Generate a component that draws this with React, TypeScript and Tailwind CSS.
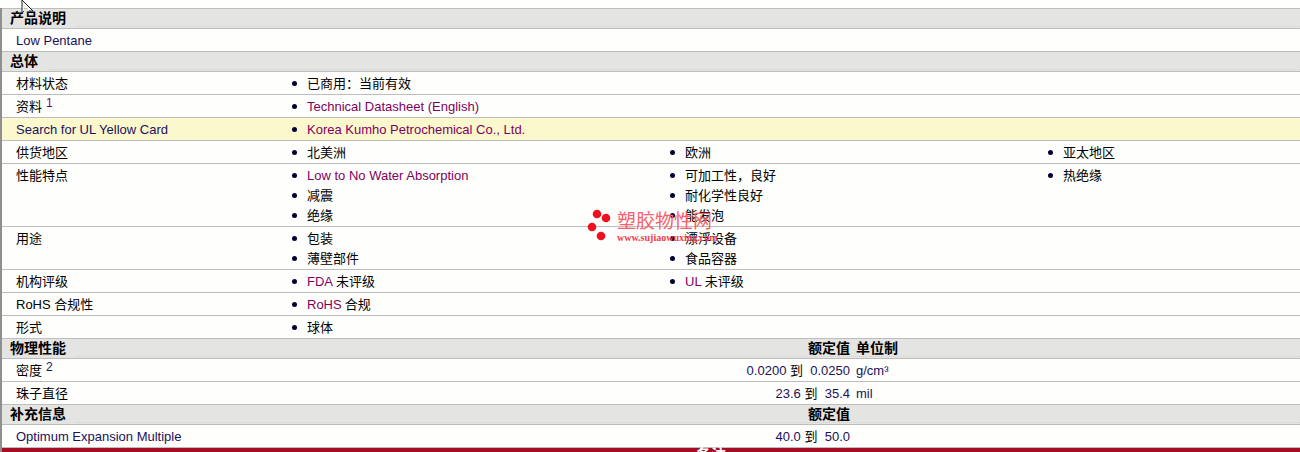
import React from 'react';

const FONT = "font-['Liberation_Sans','Noto_Sans_CJK_SC',sans-serif]";
const LINK = 'text-[#800060]';

type Item = { text: string; link?: boolean; suffix?: string };

const SectionHeader = ({ title, rated, unit }: { title: string; rated?: boolean; unit?: boolean }) => (
  <div className="flex h-[20px] items-center border-b border-[#bdbdbd] bg-[#e4e4e2] text-[14px] font-bold text-black">
    <div className="pl-[8px]">{title}</div>
    <div className="mt-[15px] ml-[10px] flex-1 border-b border-dotted border-[#d6d2d2]" />
    {rated && <div className="absolute left-[808px]">额定值</div>}
    {unit && <div className="absolute left-[856px]">单位制</div>}
  </div>
);

const Bullet = ({ item }: { item: Item }) => (
  <div className="flex h-[20px] items-center pt-[1px]">
    <span className="ml-[6px] mr-[10px] h-[5px] w-[5px] shrink-0 rounded-full bg-[#000033]" />
    <span className={item.link ? LINK : 'text-black'}>{item.text}</span>
    {item.suffix && <span className="ml-[3px] text-black">{item.suffix}</span>}
  </div>
);

const InfoRow = ({
  label,
  sup,
  cols,
  labelLink,
  yellow,
  height = 'h-[23px]',
}: {
  label: string;
  sup?: string;
  cols: Item[][];
  labelLink?: boolean;
  yellow?: boolean;
  height?: string;
}) => (
  <div className={`grid grid-cols-[284px_378px_378px_1fr] border-b border-[#bdbdbd] pt-[1px] text-[13px] ${height} ${yellow ? 'bg-[#fcf8cd]' : 'bg-[#fefffc]'}`}>
    <div className={`flex h-[20px] items-center pl-[14px] pt-[1px] ${labelLink ? 'text-[#20105a]' : 'text-black'}`}>
      {label}
      {sup && <sup className="relative -top-[4px] ml-[4px] text-[12px] text-[#800080]">{sup}</sup>}
    </div>
    {[0, 1, 2].map((i) => (
      <div key={i}>
        {(cols[i] || []).map((item) => (
          <Bullet key={item.text} item={item} />
        ))}
      </div>
    ))}
  </div>
);

const ValueRow = ({ label, sup, from, to, unit }: { label: string; sup?: string; from: string; to: string; unit?: string }) => (
  <div className="flex h-[23px] items-center border-b border-[#bdbdbd] bg-[#fefffc] pt-[1px] text-[13px] text-[#20105a]">
    <div className={`flex w-[300px] items-center pl-[14px] ${label.startsWith('Optimum') ? 'text-[#20105a]' : 'text-black'}`}>
      {label}
      {sup && <sup className="relative -top-[4px] ml-[4px] text-[12px] text-[#20105a]">{sup}</sup>}
    </div>
    <div className="w-[548px] text-right">
      {from} <span className="text-black">到</span>&nbsp; {to}
    </div>
    <div className="pl-[6px]">{unit}</div>
  </div>
);

const App = () => {
  return (
    <div className={`relative h-[452px] w-[1300px] overflow-hidden bg-[#fefffc] ${FONT}`}>
      {/* Cursor */}
      <svg className="absolute left-[21px] top-0 z-10" width="14" height="16" viewBox="0 0 14 16">
        <path d="M1 0 L1 13 L3 11 M1 0 L12 11 L8 11" fill="white" stroke="#222" strokeWidth="1" />
      </svg>

      <div className="h-[8px]" />
      <div className="border-l-2 border-[#8f8f8f]">
        <div className="h-[1px] bg-[#bdbdbd]" />
        <SectionHeader title="产品说明" />
        <div className="flex h-[23px] items-center border-b border-[#bdbdbd] pl-[14px] pt-[1px] text-[13px] text-[#20105a]">Low Pentane</div>
        <SectionHeader title="总体" />
        <InfoRow label="材料状态" cols={[[{ text: '已商用：当前有效' }]]} />
        <InfoRow label="资料" sup="1" cols={[[{ text: 'Technical Datasheet (English)', link: true }]]} />
        <InfoRow label="Search for UL Yellow Card" labelLink yellow cols={[[{ text: 'Korea Kumho Petrochemical Co., Ltd.', link: true }]]} />
        <InfoRow label="供货地区" cols={[[{ text: '北美洲' }], [{ text: '欧洲' }], [{ text: '亚太地区' }]]} />
        <InfoRow
          label="性能特点"
          height="h-[63px]"
          cols={[
            [{ text: 'Low to No Water Absorption', link: true }, { text: '减震' }, { text: '绝缘' }],
            [{ text: '可加工性，良好' }, { text: '耐化学性良好' }, { text: '能发泡' }],
            [{ text: '热绝缘' }],
          ]}
        />
        <InfoRow
          label="用途"
          height="h-[43px]"
          cols={[
            [{ text: '包装' }, { text: '薄壁部件' }],
            [{ text: '漂浮设备' }, { text: '食品容器' }],
          ]}
        />
        <InfoRow label="机构评级" cols={[[{ text: 'FDA', link: true, suffix: '未评级' }], [{ text: 'UL', link: true, suffix: '未评级' }]]} />
        <InfoRow label="RoHS 合规性" cols={[[{ text: 'RoHS', link: true, suffix: '合规' }]]} />
        <InfoRow label="形式" cols={[[{ text: '球体' }]]} />
        <SectionHeader title="物理性能" rated unit />
        <ValueRow label="密度" sup="2" from="0.0200" to="0.0250" unit="g/cm³" />
        <ValueRow label="珠子直径" from="23.6" to="35.4" unit="mil" />
        <SectionHeader title="补充信息" rated />
        <ValueRow label="Optimum Expansion Multiple" from="40.0" to="50.0" />
        <div className="h-[20px] bg-[#a50d25] pl-[120px] text-center text-[15px] font-bold leading-[14px] text-white">备注</div>
      </div>

      {/* Watermark */}
      <div className="absolute left-[587px] top-[208px] z-10 flex items-start">
        <svg width="30" height="36" viewBox="0 0 30 36">
          <circle cx="10" cy="6" r="4.3" fill="#f01020" />
          <circle cx="19" cy="10" r="4.3" fill="#f01020" />
          <circle cx="5" cy="19" r="4.3" fill="#f01020" />
          <circle cx="14" cy="28" r="4.3" fill="#f01020" />
        </svg>
        <div className="flex flex-col pt-[3px]">
          <span className="text-[19px] leading-[22px] text-[#f8606a]">塑胶物性网</span>
          <span className="font-['Liberation_Serif',serif] text-[10px] font-bold leading-[10px] text-[#f04050]">www.sujiaowuxing.com</span>
        </div>
      </div>
    </div>
  );
};

export default App;
